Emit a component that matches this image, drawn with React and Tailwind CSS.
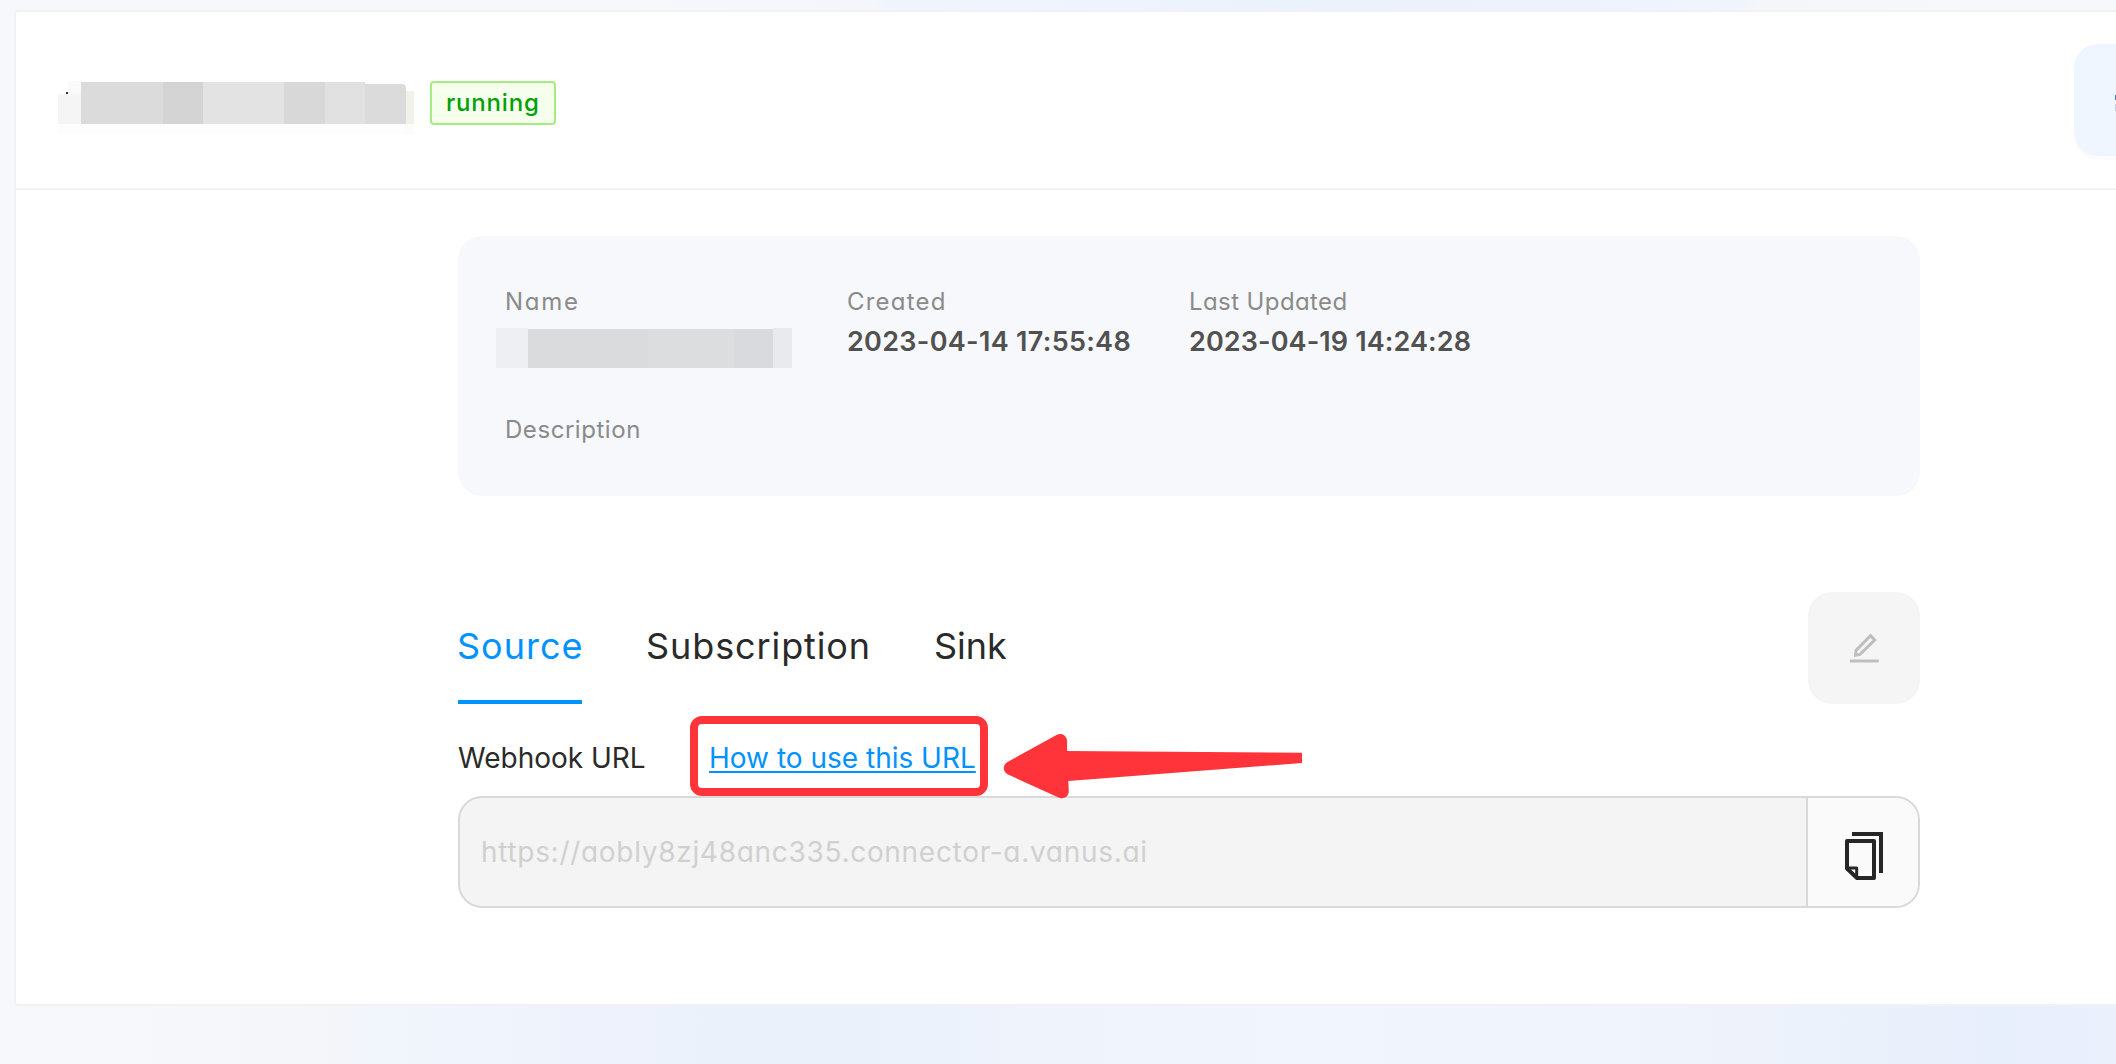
import React from 'react';

function EditIcon() {
  return (
    <svg width="30" height="30" viewBox="0 0 30 30" fill="none" stroke="#bfbfbf">
      <path d="M21.5 2.6 25.7 7 11 21.4 6.6 22.1 7 17.4Z" strokeWidth="3" />
      <path d="M.8 28h29" strokeWidth="3" />
    </svg>
  );
}

function CopyIcon() {
  return (
    <svg width="46" height="56" viewBox="0 0 46 56" className="overflow-visible" fill="none" stroke="#262626">
      <path d="M12 10H41V49" strokeWidth="4" />
      <path d="M7 17H34V54H17L7 44.5Z" strokeWidth="4" strokeLinejoin="round" />
      <path d="M7 44H16.7V54" strokeWidth="3" strokeLinejoin="round" />
    </svg>
  );
}

function Arrow() {
  return (
    <svg className="block overflow-visible" width="300" height="68" viewBox="0 0 300 68" fill="#ff343a">
      <path d="M3.5 28 52.5 1C57 -1.5 63 1 63.1 7.5V17L298 18.8V29L64.3 47 64.8 57.5C64.6 63 59 65.5 54.5 63.5L4 40.5C-1.5 38-1.5 31 3.5 28Z" />
    </svg>
  );
}

function TitleMask() {
  return (
    <div className="mt-[69px] ml-[42px] flex h-[53px] w-[356px] shrink-0">
      <div className="flex w-[23px] flex-col">
        <div className="flex h-[13px]">
          <div className="flex w-[10px] items-end justify-end">
            <div className="h-[2px] w-[2px] bg-[#333333]" />
          </div>
          <div className="flex-1 bg-[#fafafa]" />
        </div>
        <div className="h-[30px] bg-[#f5f5f5]" />
        <div className="flex-1 bg-[#fdfdfd]" />
      </div>
      <div className="flex w-[325px] flex-col bg-[#fdfdfd]">
        <div className="mt-px flex h-[42px]">
          <div className="w-[82px] bg-[#dbdbdb]" />
          <div className="w-[40px] bg-[#d4d4d4]" />
          <div className="w-[81px] bg-[#e3e3e3]" />
          <div className="w-[41px] bg-[#d8d8d8]" />
          <div className="w-[40px] bg-[#e1e1e1]" />
          <div className="mt-[2px] flex-1 rounded-tr bg-[#dbdbdb]" />
        </div>
      </div>
      <div className="flex-1 pt-[10px]">
        <div className="h-[33px] bg-[#eff3ec]" />
        <div className="h-[10px] bg-[#fcfcfc]" />
      </div>
    </div>
  );
}

function NameMask() {
  return (
    <div className="mt-[8px] ml-[-9px] flex h-[40px] w-[296px]">
      <div className="w-[32px] bg-[#eeeff3]" />
      <div className="mt-px w-[120px] bg-[#dadbdd]" />
      <div className="mt-px w-[86px] bg-[#dcdddf]" />
      <div className="mt-px w-[39px] bg-[#d9dadd]" />
      <div className="flex-1 bg-[#e9eaee]" />
    </div>
  );
}

function Label({ className, children }) {
  return <div className={`h-9 text-[24px] leading-[36px] text-[#8a8a8a] ${className}`}>{children}</div>;
}

function Value({ className, children }) {
  return <div className={`mt-[2px] text-[27px] leading-[40px] font-semibold text-[#515151] ${className}`}>{children}</div>;
}

export default function App() {
  return (
    <div className="h-[1064px] w-[2116px] overflow-hidden bg-[#f6f8fc] font-['Inter',sans-serif] whitespace-nowrap [font-feature-settings:'cv11']">
      <div className="h-[10px] bg-[linear-gradient(90deg,#f6f8fc_0px,#f6f8fc_640px,#f4f6fb_870px,#f0f4fd_890px,#eef3fd_1150px,#eaf2fb_1290px,#ecf1fc_1420px,#f0f4fd_1740px,#f5f6fa_1760px,#f6f8fc_1960px)]" />
      <main className="ml-[14px] h-[996px] w-[2110px] rounded-[4px] border-2 border-[#f2f2f3] bg-white">
        <header className="flex h-[178px] border-b-2 border-[#f2f2f3]">
          <TitleMask />
          <div className="mt-[69px] ml-[16px] h-[44px] w-[126px] shrink-0 rounded-[4px] border-2 border-[#a6ec85] bg-[#f6ffeb] pl-[14px] text-[24px] leading-[40px] font-medium tracking-[0.8px] text-[#00a108]">
            running
          </div>
          <button className="mt-[32px] ml-[1518px] flex h-[112px] w-[112px] shrink-0 flex-col rounded-[24px] bg-[#eff6ff] pt-[51px] pl-[41px] shadow-[0_4px_0_rgba(0,0,0,0.015)]">
            <span className="h-[5px] w-[20px] bg-[#3d78d8]" />
            <span className="mt-[4px] h-[7px] w-[20px] bg-[#bdd3f5]" />
          </button>
        </header>

        <div className="ml-[442px] w-[1462px]">
          <section className="mt-[46px] h-[260px] rounded-[24px] bg-[#f7f8fc] pt-[48px] pl-[47px]">
            <div className="grid h-[84px] grid-cols-[342px_342px_342px]">
              <div>
                <Label className="tracking-[1.7px]">Name</Label>
                <NameMask />
              </div>
              <div>
                <Label className="tracking-[1.2px]">Created</Label>
                <Value className="tracking-[0.3px]">2023-04-14 17:55:48</Value>
              </div>
              <div>
                <Label className="tracking-[0.4px]">Last Updated</Label>
                <Value className="tracking-[0.1px]">2023-04-19 14:24:28</Value>
              </div>
            </div>
            <Label className="mt-[44px] tracking-[0.55px]">Description</Label>
          </section>

          <div className="mt-[96px] flex h-[112px] justify-between">
            <nav className="flex text-[36px] leading-[54px] text-[#2a2a2a]">
              <div className="w-[124px] border-b-4 border-[#0092ff] pt-[27px] tracking-[1px] text-[#0092ff]">
                <span className="-ml-[1px]">Source</span>
              </div>
              <div className="ml-[64px] w-[225px] pt-[27px] tracking-[0.9px]">Subscription</div>
              <div className="ml-[63px] pt-[27px]">Sink</div>
            </nav>
            <button className="flex h-[112px] w-[112px] items-center justify-center rounded-[24px] bg-[#f5f5f5]">
              <EditIcon />
            </button>
          </div>

          <div className="flex h-[92px] pt-[12px] text-[28px] leading-[40px] text-[#2a2a2a]">
            <div className="w-[232px] pt-[22px]">Webhook URL</div>
            <div className="relative h-[80px] w-[298px] rounded-[12px] border-8 border-[#ff343a] pt-[14px] pl-[11px]">
              <a className="text-[#0092ff] underline decoration-2 underline-offset-[3px] [text-decoration-skip-ink:none]">How to use this URL</a>
              <div className="absolute top-[10px] left-[306px] z-10">
                <Arrow />
              </div>
            </div>
          </div>

          <div className="flex h-[112px] overflow-hidden rounded-[24px] border-2 border-[#d9d9d9] bg-[#f4f4f4]">
            <div className="flex-1 pt-[34px] pl-[21px] text-[28px] leading-[40px] tracking-[0.7px] text-[#d0d0d0]">
              https://aobly8zj48anc335.connector-a.vanus.ai
            </div>
            <div className="flex w-[112px] items-center justify-center border-l-2 border-[#d9d9d9] bg-[#fafafa]">
              <CopyIcon />
            </div>
          </div>
        </div>
      </main>
      <div className="h-[58px] bg-[linear-gradient(90deg,#f7f8fc_0px,#f6f8fc_130px,#f4f5f9_345px,#f1f5fc_370px,#eef2fc_620px,#eaf1fb_720px,#eaf1fb_870px,#eef3fc_1010px,#f1f5fd_1300px,#eff3fb_1700px,#eaf1fb_1860px,#e8effc_2000px,#eaf0fc_2116px)]" />
    </div>
  );
}
